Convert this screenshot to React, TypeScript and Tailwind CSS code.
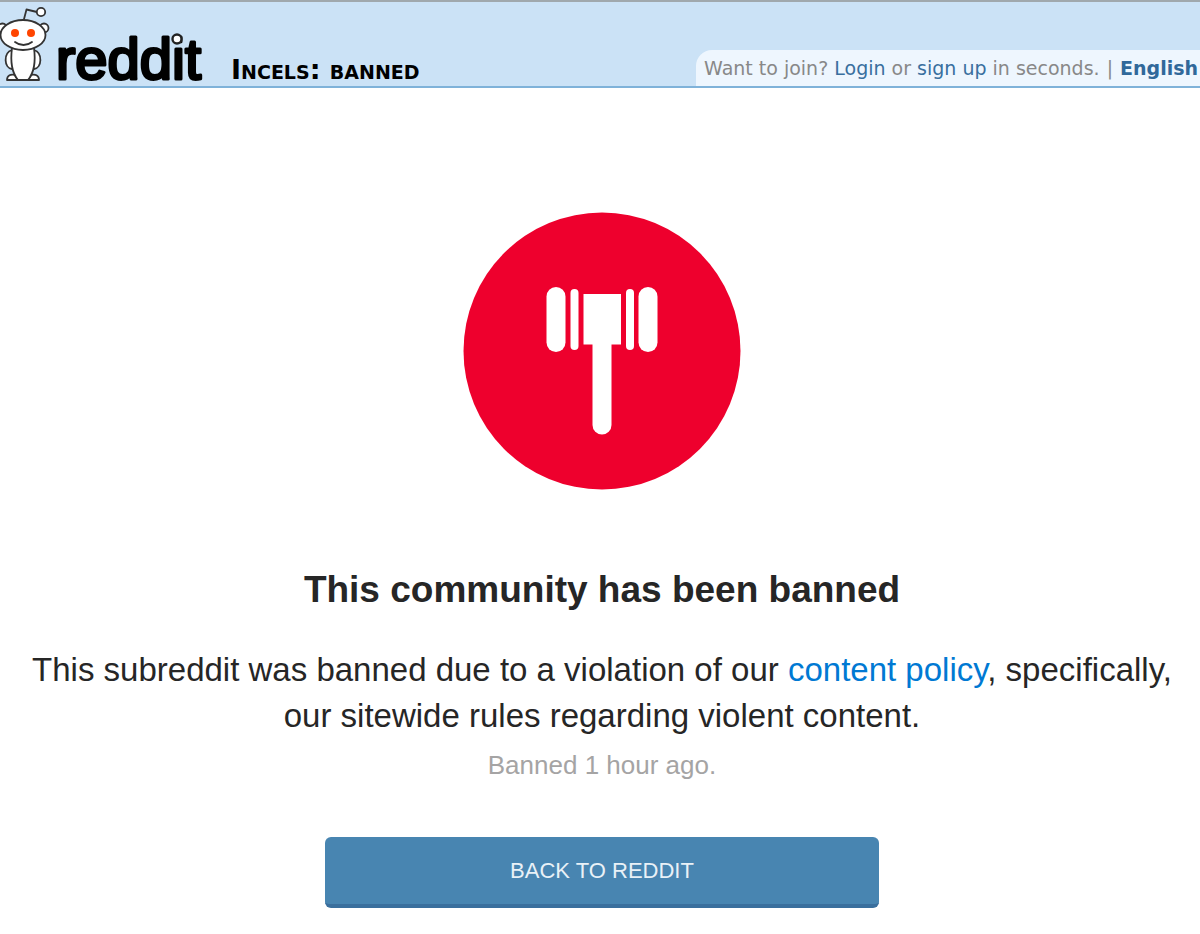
import React from 'react';

const RedditLogo: React.FC = () => (
  <svg viewBox="0 0 204 84" className="block h-[84px] w-[204px] shrink-0 overflow-visible" role="img" aria-label="reddit">
    <g fill="#fff" stroke="#333" strokeWidth="1.8" strokeLinecap="round" strokeLinejoin="round">
      {/* antenna */}
      <path d="M23.5 19 L26.5 7.5 L37 10" fill="none" />
      <circle cx="41" cy="10" r="4.2" />
      {/* ears */}
      <circle cx="2.5" cy="26" r="4.5" />
      <circle cx="44" cy="26" r="4.5" />
      {/* arms and feet */}
      <path d="M12 48 C3 51 4 66 12 67" />
      <path d="M34 48 C43 51 42 66 34 67" />
      <path d="M7 78 C7 73 11 72 15 73 L18 78 Z" />
      <path d="M39 78 C39 73 35 72 31 73 L28 78 Z" />
      {/* body and head */}
      <path d="M12 46 C10 61 13 72 18 78 L28 78 C33 72 36 61 34 46 Z" />
      <ellipse cx="23" cy="33" rx="22.5" ry="15" />
      <path d="M15 40 C20 44 27 44 32 40" fill="none" />
    </g>
    <circle cx="15" cy="31" r="4" fill="#ff4500" />
    <circle cx="31" cy="31" r="4" fill="#ff4500" />
    <text
      x="56"
      y="77"
      fill="#000"
      stroke="#000"
      strokeWidth="3"
      strokeLinejoin="round"
      className="font-['Liberation_Sans',Arial,sans-serif] text-[58px]"
    >
      reddit
    </text>
    <circle cx="177" cy="37" r="4.5" fill="#fff" stroke="#222" strokeWidth="2.4" />
  </svg>
);

const GavelIcon: React.FC = () => (
  <svg viewBox="0 0 278 278" className="block size-[278px]" aria-hidden="true">
    <circle cx="139" cy="139" r="138.5" fill="#ee002d" />
    <g fill="#fff">
      <rect x="83.5" y="75" width="19" height="65" rx="9.5" />
      <rect x="107.5" y="77" width="8" height="61" rx="4" />
      <rect x="120.5" y="82" width="37.5" height="50.5" />
      <rect x="163" y="77" width="8" height="61" rx="4" />
      <rect x="175.5" y="75" width="19" height="65" rx="9.5" />
      <path d="M129.5 130 H148.5 V213 A9.5 9.5 0 0 1 129.5 213 Z" />
    </g>
  </svg>
);

const Header: React.FC = () => (
  <header className="flex items-end justify-between border-t-2 border-b-2 border-t-[#a0a8ad] border-b-[#7fb2d9] bg-[#cbe2f6] font-['DejaVu_Sans',Verdana,sans-serif]">
    <div className="flex items-end">
      <a href="/">
        <RedditLogo />
      </a>
      <h1 className="ml-[27px] text-[27px] leading-8 font-bold whitespace-nowrap text-black [font-variant:small-caps]">
        Incels: banned
      </h1>
    </div>
    <div className="rounded-tl-2xl bg-[#eef6fe] py-1 pr-[2px] pl-2 text-[19px] leading-7 whitespace-nowrap text-[#888]">
      Want to join?{' '}
      <a href="/login" className="text-[#396f9e]">Login</a> or{' '}
      <a href="/register" className="text-[#396f9e]">sign up</a> in seconds.
      <span className="mx-[7px]">|</span>
      <a href="/language" className="font-bold text-[#30689a]">English</a>
    </div>
  </header>
);

export default function App() {
  return (
    <div className="min-h-screen bg-white font-['Liberation_Sans',Arial,sans-serif] text-[#262626]">
      <Header />
      <main className="flex flex-col items-center pt-[124px] pr-4 pb-6 pl-5 text-center">
        <GavelIcon />
        <h2 className="mt-[76px] text-[37px] leading-12 font-bold">This community has been banned</h2>
        <p className="mt-[33px] text-[33px] leading-[46px]">
          This subreddit was banned due to a violation of our{' '}
          <a href="/help/contentpolicy" className="text-[#0079d3]">content policy</a>, specifically,
          <br />
          our sitewide rules regarding violent content.
        </p>
        <p className="mt-2 text-[26px] leading-9 text-[#a5a4a4]">Banned 1 hour ago.</p>
        <button
          type="button"
          className="mt-[54px] h-[71px] w-full max-w-[554px] rounded-md border-b-4 border-[#3a6f9d] bg-[#4885b1] text-[22px] text-[#e9f1f7] uppercase"
        >
          Back to reddit
        </button>
      </main>
    </div>
  );
}
